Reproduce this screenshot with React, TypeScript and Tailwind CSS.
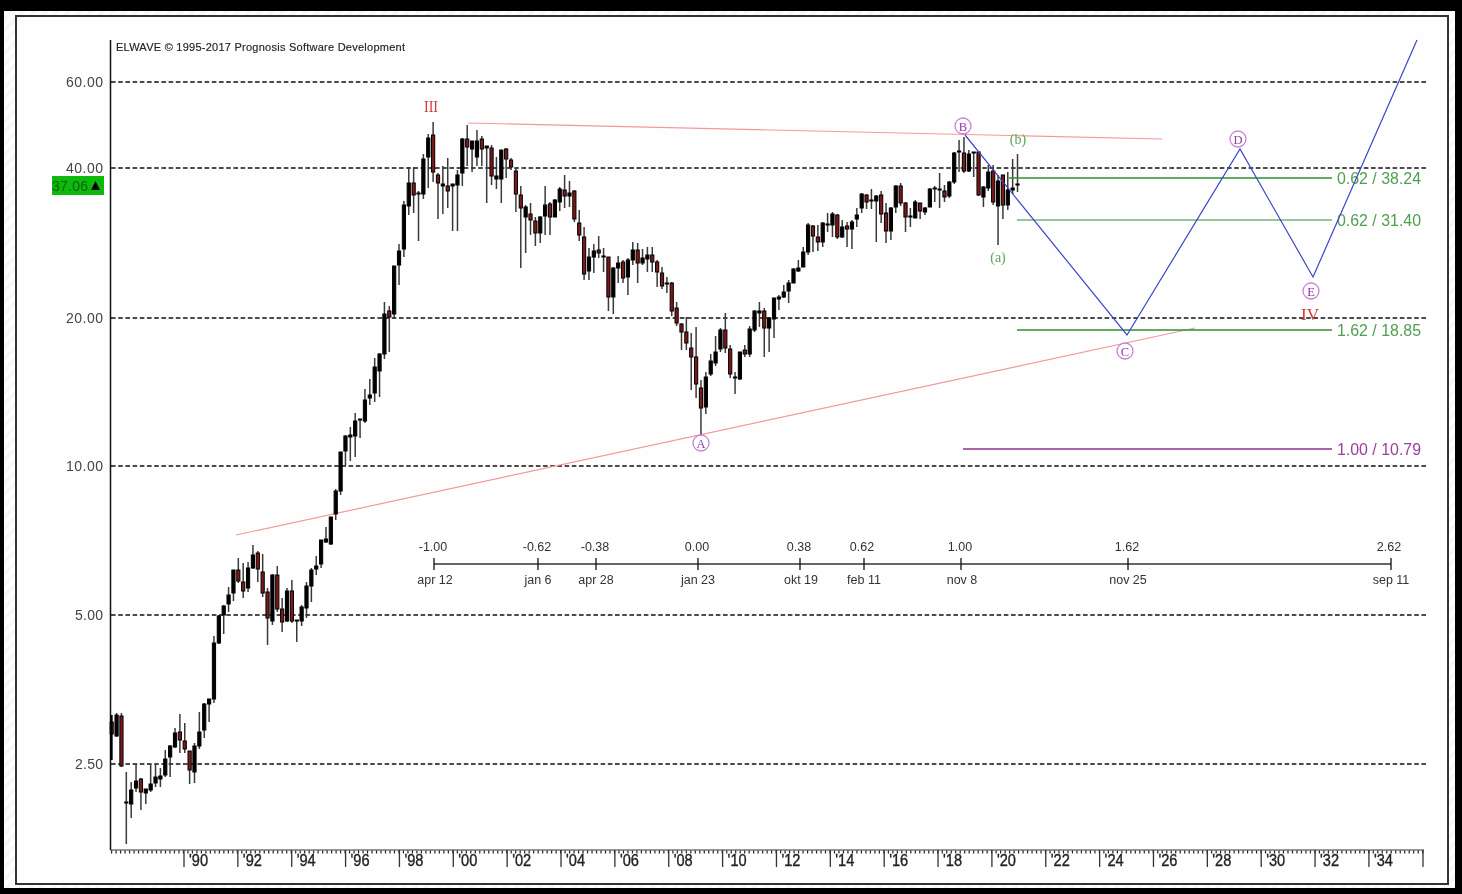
// price chart screenshot: svg coordinates equal page coordinates (see viewBox)

// [high, bodyTop, bodyBottom, low, red]
const candles: [number, number, number, number, number][] = [
  [715, 722, 734, 760, 1], [713, 715, 736, 737, 0], [713, 716, 766, 767, 1], [772, 802, 803, 844, 1],
  [782, 790, 804, 818, 0], [764, 781, 788, 792, 0], [778, 779, 792, 810, 1], [789, 789, 793, 804, 0],
  [764, 784, 790, 792, 0], [764, 777, 783, 787, 0], [768, 776, 779, 787, 0], [750, 759, 775, 777, 0],
  [745, 746, 757, 777, 0], [728, 733, 747, 748, 0], [714, 732, 740, 753, 1], [723, 741, 749, 753, 1],
  [751, 751, 770, 784, 1], [743, 746, 772, 783, 0], [712, 732, 746, 749, 0], [703, 704, 730, 738, 0],
  [699, 699, 704, 722, 0], [636, 643, 699, 703, 0], [615, 616, 643, 644, 0], [605, 606, 615, 634, 0],
  [587, 595, 604, 612, 0], [570, 570, 593, 601, 0], [558, 570, 581, 583, 1], [563, 582, 591, 598, 1],
  [562, 568, 588, 592, 0], [545, 555, 568, 569, 0], [551, 553, 569, 582, 1], [554, 572, 593, 597, 1],
  [588, 592, 618, 645, 1], [574, 575, 621, 625, 0], [566, 575, 609, 612, 1], [598, 609, 622, 632, 1],
  [588, 591, 621, 622, 0], [580, 591, 621, 623, 1], [620, 620, 621, 642, 0], [605, 607, 621, 626, 0],
  [582, 586, 608, 618, 0], [568, 570, 586, 602, 0], [556, 566, 569, 575, 0], [540, 540, 564, 568, 0],
  [527, 539, 542, 543, 0], [517, 517, 544, 545, 0], [489, 491, 514, 520, 0], [452, 452, 491, 495, 0],
  [435, 436, 451, 466, 0], [427, 435, 437, 461, 0], [413, 421, 436, 457, 0], [419, 419, 420, 438, 1],
  [389, 400, 421, 423, 0], [379, 395, 398, 405, 0], [358, 367, 393, 402, 0], [353, 354, 371, 397, 0],
  [302, 314, 354, 359, 0], [306, 311, 317, 352, 1], [266, 266, 314, 319, 0], [244, 251, 265, 285, 0],
  [201, 205, 249, 257, 0], [167, 183, 206, 215, 0], [167, 183, 195, 213, 1], [191, 193, 194, 241, 0],
  [154, 159, 194, 199, 0], [134, 138, 157, 188, 0], [122, 135, 172, 182, 1], [173, 175, 183, 219, 1],
  [166, 184, 186, 214, 0], [158, 186, 191, 208, 1], [184, 184, 186, 231, 0], [170, 175, 185, 231, 0],
  [138, 139, 173, 186, 0], [125, 139, 147, 166, 1], [141, 141, 149, 172, 0], [130, 141, 157, 166, 0],
  [136, 139, 149, 166, 1], [146, 146, 148, 203, 0], [145, 148, 176, 185, 1], [157, 176, 179, 189, 0],
  [150, 150, 179, 203, 0], [148, 149, 159, 178, 1], [158, 160, 167, 170, 1], [168, 171, 194, 212, 1],
  [186, 195, 208, 268, 1], [205, 207, 217, 253, 0], [203, 214, 220, 235, 1], [217, 221, 233, 246, 1],
  [216, 217, 233, 243, 0], [186, 205, 216, 235, 0], [202, 204, 217, 235, 1], [199, 200, 217, 217, 0],
  [187, 189, 202, 211, 0], [175, 190, 196, 208, 1], [181, 193, 196, 207, 0], [190, 191, 219, 222, 1],
  [210, 223, 235, 241, 1], [227, 237, 274, 280, 1], [248, 257, 271, 280, 0], [244, 251, 257, 273, 0],
  [236, 250, 253, 258, 1], [248, 256, 257, 272, 0], [257, 257, 297, 311, 1], [267, 268, 297, 314, 0],
  [256, 263, 268, 283, 0], [260, 262, 278, 283, 1], [258, 260, 277, 295, 0], [242, 250, 260, 265, 0],
  [243, 250, 263, 283, 1], [249, 258, 263, 265, 0], [247, 255, 259, 272, 0], [247, 255, 262, 272, 1],
  [260, 262, 272, 287, 1], [267, 273, 286, 289, 1], [277, 283, 284, 293, 0], [282, 283, 311, 316, 1],
  [302, 308, 323, 326, 1], [323, 324, 332, 350, 1], [317, 332, 343, 350, 1], [333, 348, 357, 390, 1],
  [327, 357, 384, 398, 1], [380, 388, 408, 435, 1], [372, 377, 407, 414, 0], [354, 361, 374, 376, 0],
  [336, 352, 363, 366, 0], [328, 330, 349, 352, 0], [313, 330, 348, 353, 1], [345, 349, 374, 378, 1],
  [372, 377, 378, 394, 0], [352, 352, 379, 380, 0], [345, 350, 354, 357, 1], [326, 329, 354, 357, 0],
  [310, 311, 330, 332, 0], [302, 311, 313, 327, 0], [308, 311, 328, 357, 1], [317, 318, 328, 352, 0],
  [298, 298, 319, 338, 0], [295, 297, 299, 310, 0], [285, 292, 297, 298, 0], [280, 283, 291, 303, 0],
  [268, 269, 283, 283, 0], [260, 268, 271, 272, 0], [247, 252, 267, 267, 0], [223, 225, 252, 255, 0],
  [225, 226, 236, 252, 1], [225, 237, 242, 251, 1], [222, 223, 242, 247, 0], [213, 224, 225, 232, 0],
  [212, 214, 225, 237, 0], [214, 215, 237, 239, 1], [220, 227, 237, 238, 0], [222, 226, 229, 247, 1],
  [220, 222, 229, 249, 0], [208, 215, 219, 227, 0], [193, 194, 208, 213, 0], [194, 195, 202, 209, 1],
  [189, 200, 201, 209, 0], [195, 196, 201, 242, 0], [191, 195, 214, 223, 1], [203, 213, 231, 243, 1],
  [207, 208, 231, 240, 0], [185, 186, 207, 213, 0], [183, 186, 203, 206, 1], [202, 203, 217, 232, 1],
  [208, 216, 217, 227, 0], [200, 202, 218, 218, 0], [203, 203, 211, 219, 1], [207, 208, 212, 215, 0],
  [188, 189, 207, 207, 0], [186, 188, 189, 202, 0], [173, 189, 190, 208, 0], [185, 191, 197, 202, 1],
  [181, 182, 196, 198, 0], [152, 153, 182, 184, 0], [140, 151, 152, 172, 0], [137, 153, 171, 173, 1],
  [150, 154, 171, 172, 0], [152, 152, 153, 177, 0], [151, 152, 195, 196, 1], [186, 187, 197, 207, 0],
  [165, 172, 188, 191, 0], [165, 171, 202, 205, 1], [175, 181, 206, 245, 0], [175, 175, 205, 219, 1],
  [172, 190, 205, 210, 0], [159, 188, 190, 194, 0], [154, 184, 185, 192, 0],
]

const grid = [82, 168, 318, 466, 615, 764]

const prices = [
  { label: '60.00', y: 87, w: 37 },
  { label: '40.00', y: 173, w: 37 },
  { label: '20.00', y: 323, w: 37 },
  { label: '10.00', y: 471, w: 37 },
  { label: '5.00', y: 620, w: 28 },
  { label: '2.50', y: 769, w: 28 },
]

const years = ['90', '92', '94', '96', '98', '00', '02', '04', '06', '08', '10', '12', '14', '16', '18', '20', '22', '24', '26', '28', '30', '32', '34']

const ruler = [
  { x: 434, top: '-1.00', topX: 433, bottom: 'apr 12', bottomX: 435 },
  { x: 538, top: '-0.62', topX: 537, bottom: 'jan 6', bottomX: 538 },
  { x: 596, top: '-0.38', topX: 595, bottom: 'apr 28', bottomX: 596 },
  { x: 698, top: '0.00', topX: 697, bottom: 'jan 23', bottomX: 698 },
  { x: 800, top: '0.38', topX: 799, bottom: 'okt 19', bottomX: 801 },
  { x: 864, top: '0.62', topX: 862, bottom: 'feb 11', bottomX: 864 },
  { x: 961, top: '1.00', topX: 960, bottom: 'nov 8', bottomX: 962 },
  { x: 1128, top: '1.62', topX: 1127, bottom: 'nov 25', bottomX: 1128 },
  { x: 1391, top: '2.62', topX: 1389, bottom: 'sep 11', bottomX: 1391 },
]

const fibs = [
  { label: '0.62 / 38.24', y: 178, from: 1009, line: 'stroke-[#2f8f2f]', text: 'fill-[#4f9f4f]', w: 1.6 },
  { label: '0.62 / 31.40', y: 220, from: 1017, line: 'stroke-[#2f8f2f]', text: 'fill-[#4f9f4f]', w: 1.2 },
  { label: '1.62 / 18.85', y: 330, from: 1017, line: 'stroke-[#2f8f2f]', text: 'fill-[#4f9f4f]', w: 1.4 },
  { label: '1.00 / 10.79', y: 449, from: 963, line: 'stroke-[#8f2f8f]', text: 'fill-[#9a3f9a]', w: 1.6 },
]

const waves = [
  { label: 'A', x: 701, y: 443 },
  { label: 'B', x: 963, y: 126 },
  { label: 'C', x: 1125, y: 351 },
  { label: 'D', x: 1238, y: 139 },
  { label: 'E', x: 1311, y: 291 },
]

function Candle({ i, data }: { i: number; data: [number, number, number, number, number] }) {
  const [high, top, bottom, low, red] = data
  const x = 111.7 + i * 4.87
  return (
    <g>
      <line x1={x} x2={x} y1={high} y2={low} className="stroke-[#3a3a3a] stroke-[1.5]" />
      <rect
        x={x - 1.6}
        y={top}
        width={3.2}
        height={bottom - top}
        className={red ? 'fill-[#7d1818] stroke-black stroke-[1]' : 'fill-black stroke-black stroke-[1]'}
      />
    </g>
  )
}

function Chart() {
  return (
    <svg viewBox="17 17 1430 866" className="block h-[866px] w-[1430px] font-['Liberation_Sans',sans-serif] blur-[0.45px]">
      {grid.map((y) => (
        <line key={y} x1={111} x2={1427} y1={y} y2={y} strokeDasharray="4.6 2.6" className="stroke-[#111] stroke-[1.4]" />
      ))}

      <text x={116} y={51} textLength={289} lengthAdjust="spacing" className="fill-[#222] stroke-[#222] stroke-[0.15] text-[11px]">
        ELWAVE © 1995-2017 Prognosis Software Development
      </text>

      {prices.map((p) => (
        <text key={p.label} x={103 - p.w} y={p.y} textLength={p.w} className="fill-[#444] text-[14px]">
          {p.label}
        </text>
      ))}

      <rect x={52} y={176} width={52} height={19} className="fill-[#0cb90c]" />
      <text x={52} y={191} textLength={36} className="fill-[#0d640d] text-[14px]">37.06</text>
      <polygon points="91,190 100,190 95.5,181" className="fill-black" />

      <line x1={468} y1={123} x2={1162} y2={139} className="stroke-[#f29a9a] stroke-[1.2]" />
      <line x1={236} y1={535} x2={1195} y2={328} className="stroke-[#f29a9a] stroke-[1.2]" />

      {candles.map((c, i) => (
        <Candle key={i} i={i} data={c} />
      ))}

      <line x1={110.5} x2={110.5} y1={40} y2={850} className="stroke-[#111] stroke-[1.5]" />
      <line x1={111.5} x2={111.5} y1={715} y2={760} className="stroke-black stroke-[2]" />
      <line x1={110} x2={1424} y1={850} y2={850} className="stroke-[#333] stroke-[1.2]" />
      <line x1={111} x2={1424} y1={852} y2={852} strokeDasharray="1.2 3.29" className="stroke-[#222] stroke-[3]" />
      {years.map((y, i) => {
        const x = 184 + i * 53.86
        return (
          <g key={y}>
            <line x1={x} x2={x} y1={850} y2={867} className="stroke-[#333] stroke-[1.3]" />
            <text x={x + 5} y={866} textLength={19} lengthAdjust="spacingAndGlyphs" className="fill-[#222] stroke-[#222] stroke-[0.35] text-[16px]">
              {"'" + y}
            </text>
          </g>
        )
      })}
      <line x1={1423} x2={1423} y1={850} y2={867} className="stroke-[#333] stroke-[1.3]" />

      <line x1={434} x2={1391} y1={564} y2={564} className="stroke-[#333] stroke-[1.3]" />
      {ruler.map((r) => (
        <g key={r.x}>
          <line x1={r.x} x2={r.x} y1={558} y2={570} className="stroke-[#111] stroke-[1.3]" />
          <text x={r.topX} y={551} textAnchor="middle" className="fill-[#333] text-[12.5px]">{r.top}</text>
          <text x={r.bottomX} y={584} textAnchor="middle" className="fill-[#333] text-[12.5px]">{r.bottom}</text>
        </g>
      ))}

      {fibs.map((f) => (
        <g key={f.label}>
          <line x1={f.from} x2={1332} y1={f.y} y2={f.y} strokeWidth={f.w} className={f.line} />
          <text x={1337} y={f.y + 6} textLength={84} lengthAdjust="spacingAndGlyphs" className={f.text + ' text-[16px]'}>
            {f.label}
          </text>
        </g>
      ))}

      <polyline
        points="965,135 1127,335 1240,149 1313,277 1417,40"
        fill="none"
        className="stroke-[#3a46c8] stroke-[1.2]"
      />

      {waves.map((w) => (
        <g key={w.label}>
          <circle cx={w.x} cy={w.y} r={8} fill="#fff" className="stroke-[#cc80d4] stroke-[1.3]" />
          <text x={w.x} y={w.y + 4.5} textAnchor="middle" className="fill-[#8f3aa0] font-['Liberation_Serif',serif] text-[12.5px]">
            {w.label}
          </text>
        </g>
      ))}

      <text x={998} y={262} textAnchor="middle" className="fill-[#5aa55a] font-['Liberation_Serif',serif] text-[14px]">(a)</text>
      <text x={1018} y={144} textAnchor="middle" className="fill-[#5aa55a] font-['Liberation_Serif',serif] text-[14px]">(b)</text>
      <text x={431} y={112} textAnchor="middle" className="fill-[#d13a3a] font-['Liberation_Serif',serif] text-[17px]" textLength={14} lengthAdjust="spacingAndGlyphs">III</text>
      <text x={1310} y={320} textAnchor="middle" className="fill-[#d13a3a] font-['Liberation_Serif',serif] text-[17px]">IV</text>
    </svg>
  )
}

export default function App() {
  return (
    <div className="h-[894px] w-[1462px] overflow-hidden bg-black pb-[6px] pl-[4px] pr-[7px] pt-[11px]">
      <div className="h-full bg-[repeating-linear-gradient(135deg,#ffffff_0,#ffffff_4px,#f8f8f8_4px,#f8f8f8_8px)] pb-[3px] pl-[11px] pr-[6px] pt-[4px]">
        <div className="h-[870px] w-[1434px] border-2 border-[#333] bg-[#fefefe]">
          <Chart />
        </div>
      </div>
    </div>
  )
}
